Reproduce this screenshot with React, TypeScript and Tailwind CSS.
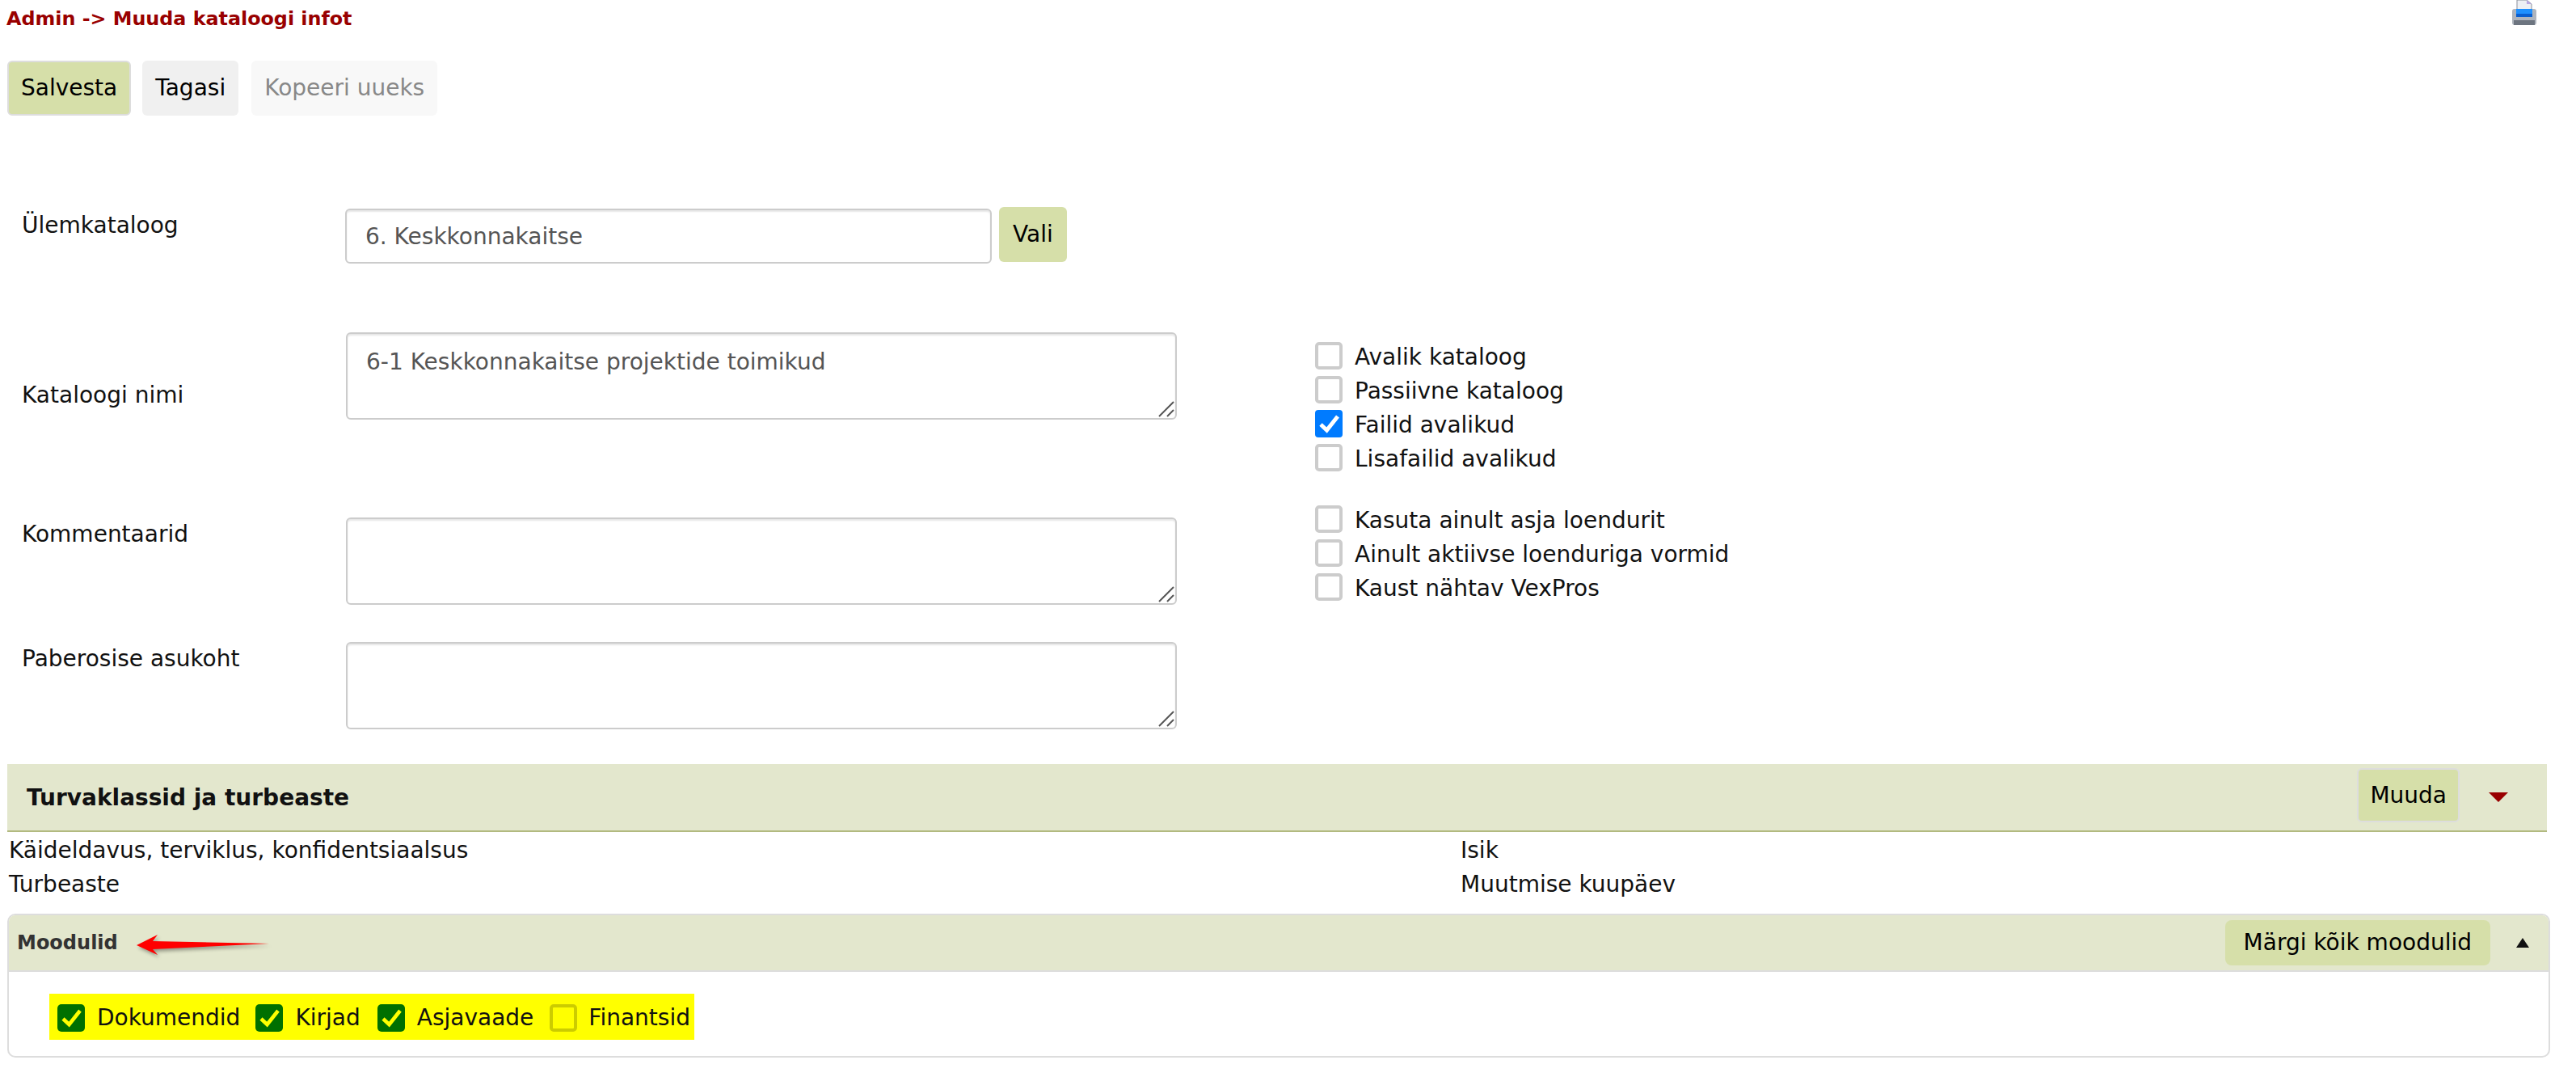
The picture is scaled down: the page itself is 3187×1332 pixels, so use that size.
import React from 'react';

const tick = 'M7 18 L14.5 25 L28 8';

const Box: React.FC<{ checked?: boolean; variant?: 'blue' | 'green' | 'yellow' }> = ({ checked, variant = 'blue' }) => {
  if (variant === 'green') {
    return (
      <span className="block h-[34px] w-[34px] shrink-0 rounded-[5px] bg-[#007000]">
        <svg viewBox="0 0 34 34" className="h-[34px] w-[34px]">
          <path d={tick} fill="none" stroke="#ffff00" strokeWidth="4.6" />
        </svg>
      </span>
    );
  }
  if (variant === 'yellow') {
    return <span className="block h-[34px] w-[34px] shrink-0 rounded-[5px] border-[4px] border-[#cccc00] bg-[#ffff00]" />;
  }
  if (checked) {
    return (
      <span className="block h-[34px] w-[34px] shrink-0 rounded-[4px] bg-[#007bff]">
        <svg viewBox="0 0 34 34" className="h-[34px] w-[34px]">
          <path d={tick} fill="none" stroke="#ffffff" strokeWidth="5" />
        </svg>
      </span>
    );
  }
  return <span className="block h-[34px] w-[34px] shrink-0 rounded-[5px] border-[4px] border-[#cccccc] bg-white" />;
};

const CheckRow: React.FC<{ label: string; checked?: boolean }> = ({ label, checked }) => (
  <label className="flex h-[42px] items-center gap-[15px] text-[#111]">
    <Box checked={checked} />
    <span className="pt-[4px]">{label}</span>
  </label>
);

const Field: React.FC<{ label: string; labelClass: string; className: string; value?: string }> = ({
  label,
  labelClass,
  className,
  value,
}) => (
  <div className={`flex ${className}`}>
    <div className={`w-[419px] shrink-0 pl-[18px] text-[#111] ${labelClass}`}>{label}</div>
    <div className="relative h-[108px] w-[1028px]">
      <textarea
        defaultValue={value}
        className="h-full w-full resize-none rounded-[6px] border-2 border-[#cccccc] px-[23px] py-[14px] text-[#555] shadow-[inset_0_2px_2px_rgba(0,0,0,0.1)] outline-none"
      />
      <svg viewBox="0 0 20 20" className="absolute right-[3px] bottom-[3px] h-[20px] w-[20px]">
        <path d="M1 19 L19 1 M11 19 L19 11" stroke="#555" strokeWidth="2" fill="none" />
      </svg>
    </div>
  </div>
);

const PrinterIcon = () => (
  <svg viewBox="0 0 32 32" className="h-[32px] w-[32px] blur-[0.6px]">
    <path d="M7 0 H19 L25 5 V16 H7 Z" fill="#eef0f4" stroke="#8a8f9a" strokeWidth="1" />
    <path d="M19 0 L25 5 H19 Z" fill="#b9a8e0" />
    <rect x="1" y="11" width="30" height="20" rx="3" fill="#aeb4bd" />
    <rect x="6" y="11" width="20" height="9" fill="#1e90ff" />
    <rect x="6" y="17" width="20" height="4" fill="#0a5fd0" />
    <rect x="3" y="25" width="26" height="6" fill="#6d7580" />
  </svg>
);

const App: React.FC = () => {
  return (
    <div className="h-[1332px] w-[3187px] overflow-hidden bg-white pl-[9px] font-['DejaVu_Sans',sans-serif] text-[28px] leading-[42px]">
      {/* Title row */}
      <div className="flex h-[32px] items-start justify-between pr-[48px]">
        <div className="-ml-[1px] pt-[3px] text-[23.8px] leading-[40px] font-bold text-[#990000]">Admin -&gt; Muuda kataloogi infot</div>
        <PrinterIcon />
      </div>

      {/* Toolbar */}
      <div className="mt-[43px] flex gap-[14px]">
        <button className="h-[68px] rounded-[6px] border-2 border-[#dddddd] bg-[#d6dfa9] px-[15px] text-black">Salvesta</button>
        <button className="h-[68px] rounded-[6px] bg-[#f0f0f0] px-[16px] text-black">Tagasi</button>
        <button className="ml-[2px] h-[68px] rounded-[6px] bg-[#f8f8f8] px-[16px] text-[#888888]">Kopeeri uueks</button>
      </div>

      {/* Parent catalogue */}
      <div className="mt-[115px] flex">
        <div className="w-[418px] shrink-0 pl-[18px] text-[#111]">Ülemkataloog</div>
        <input
          defaultValue="6. Keskkonnakaitse"
          className="h-[68px] w-[800px] rounded-[6px] border-2 border-[#cccccc] px-[23px] text-[#555] shadow-[inset_0_2px_2px_rgba(0,0,0,0.1)] outline-none"
        />
        <button className="-mt-[2px] ml-[9px] h-[68px] rounded-[6px] bg-[#d6dfa9] px-[17px] text-black">Vali</button>
      </div>

      {/* Main form */}
      <div className="mt-[85px] flex">
        <div className="w-[1618px] shrink-0">
          <Field label="Kataloogi nimi" labelClass="pt-[57px]" className="" value="6-1 Keskkonnakaitse projektide toimikud" />
          <Field label="Kommentaarid" labelClass="pt-[0px]" className="mt-[121px]" />
          <Field label="Paberosise asukoht" labelClass="pt-[0px]" className="mt-[46px]" />
        </div>
        <div className="mt-[8px]">
          <CheckRow label="Avalik kataloog" />
          <CheckRow label="Passiivne kataloog" />
          <CheckRow label="Failid avalikud" checked />
          <CheckRow label="Lisafailid avalikud" />
          <div className="h-[34px]" />
          <CheckRow label="Kasuta ainult asja loendurit" />
          <CheckRow label="Ainult aktiivse loenduriga vormid" />
          <CheckRow label="Kaust nähtav VexPros" />
        </div>
      </div>

      {/* Security classes */}
      <div className="mt-[43px] flex h-[84px] w-[3142px] items-center justify-between border-b-2 border-[#b2ba80] bg-[#e3e7cd] pr-[48px] pl-[24px]">
        <div className="pt-[2px] font-bold text-[#111]">Turvaklassid ja turbeaste</div>
        <div className="flex items-center">
          <button className="-mt-[5px] h-[67px] rounded-[6px] border-2 border-[#dddddd] bg-[#d6dfa9] px-[14px] text-black">Muuda</button>
          <span className="ml-[36px] h-0 w-0 border-x-[12px] border-t-[12px] border-x-transparent border-t-[#990000]" />
        </div>
      </div>
      <div className="grid grid-cols-[1796px_1fr] pt-[2px] pl-[2px] text-[#111]">
        <div>Käideldavus, terviklus, konfidentsiaalsus</div>
        <div>Isik</div>
        <div>Turbeaste</div>
        <div>Muutmise kuupäev</div>
      </div>

      {/* Modules */}
      <div className="mt-[15px] h-[178px] w-[3146px] overflow-hidden rounded-[10px] border-2 border-[#dddddd]">
        <div className="relative flex h-[70px] items-center justify-between border-b-2 border-[#dddddd] bg-[#e3e7cd] pr-[24px] pl-[10px]">
          <div className="text-[24px] font-bold text-[#333]">Moodulid</div>
          <svg viewBox="0 0 164 26" className="absolute top-[24px] left-[158px] h-[26px] w-[164px] drop-shadow-[2px_3px_2px_rgba(0,0,0,0.35)]">
            <path d="M0 13 L26 0 L20 8 L164 11 L20 18 L26 25 Z" fill="#ff0000" />
          </svg>
          <div className="flex items-center">
            <button className="h-[56px] rounded-[8px] bg-[#d6dfa9] px-[23px] text-black">Märgi kõik moodulid</button>
            <span className="ml-[32px] h-0 w-0 border-x-[8px] border-b-[12px] border-x-transparent border-b-[#111]" />
          </div>
        </div>
        <div className="mt-[27px] ml-[50px] flex h-[57px] w-[798px] items-center bg-[#ffff00] pt-[2px] pl-[10px] text-[#111]">
          <Box variant="green" />
          <span className="ml-[15px]">Dokumendid</span>
          <span className="ml-[19px]"><Box variant="green" /></span>
          <span className="ml-[15px]">Kirjad</span>
          <span className="ml-[21px]"><Box variant="green" /></span>
          <span className="ml-[15px]">Asjavaade</span>
          <span className="ml-[20px]"><Box variant="yellow" /></span>
          <span className="ml-[14px]">Finantsid</span>
        </div>
      </div>
    </div>
  );
};

export default App;
